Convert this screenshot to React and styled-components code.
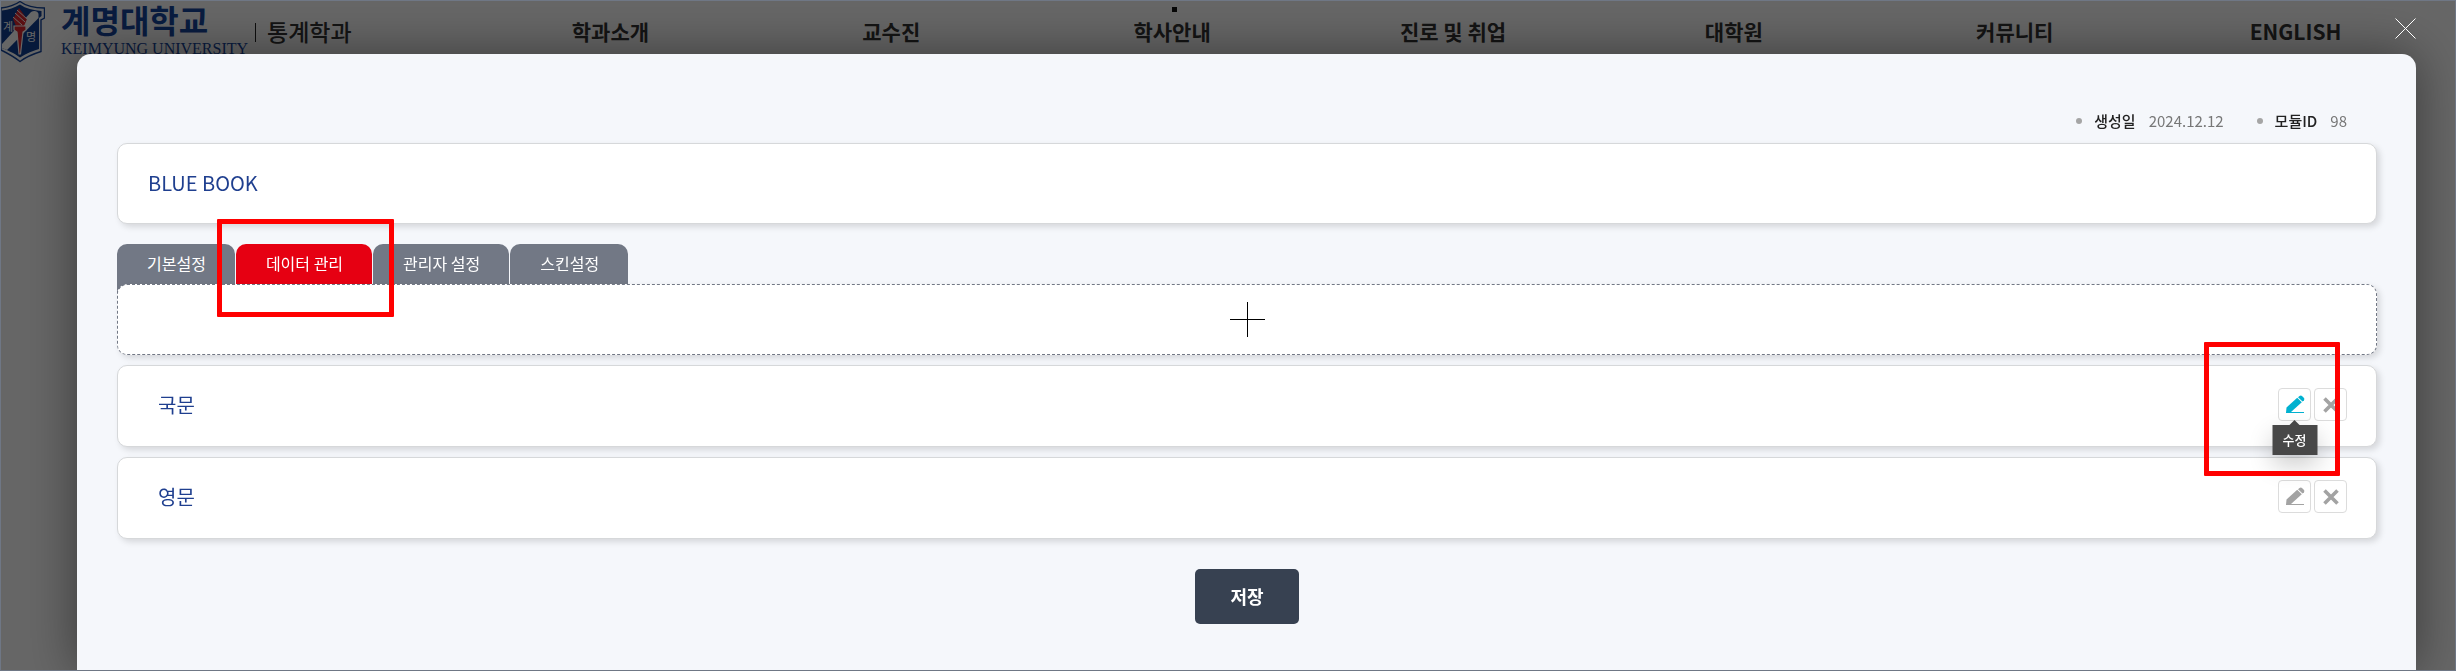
import { useState } from "react";
import styled, { createGlobalStyle, css } from "styled-components";

const GlobalStyle = createGlobalStyle`
  * {
    box-sizing: border-box;
  }
  body {
    margin: 0;
    background: #fff;
    color: #222;
    font-family: "Noto Sans CJK KR", "Noto Sans", sans-serif;
  }
  button {
    font-family: inherit;
  }
`;

const menus = [
  "학과소개",
  "교수진",
  "학사안내",
  "진로 및 취업",
  "대학원",
  "커뮤니티",
  "ENGLISH",
];

const tabs = ["기본설정", "데이터 관리", "관리자 설정", "스킨설정"];

const rows = [
  { id: "ko", name: "국문" },
  { id: "en", name: "영문" },
];

const Page = styled.div`
  min-height: 100vh;
`;

const Header = styled.header`
  display: flex;
  align-items: flex-start;
  height: 64px;
  padding-right: 20px;
`;

const Brand = styled.a`
  display: flex;
  flex: 0 0 470px;
  color: #16469e;
  text-decoration: none;
`;

const Wordmark = styled.span`
  display: flex;
  flex-direction: column;
  width: 184px;
  margin: 4px 10px 0 16px;
`;

const WordmarkKo = styled.strong`
  font-family: "Liberation Sans", "Noto Sans CJK KR", sans-serif;
  font-size: 32px;
  font-weight: 700;
  line-height: 36px;
  white-space: nowrap;
`;

const WordmarkEn = styled.span`
  font-family: "Liberation Serif", serif;
  font-size: 16px;
  line-height: 18px;
  white-space: nowrap;
`;

const Department = styled.span`
  height: 19px;
  margin-top: 23px;
  padding-left: 11px;
  border-left: 1px solid #222;
  color: #333;
  font-size: 23px;
  font-weight: 500;
  line-height: 16px;
`;

const Menu = styled.nav`
  display: grid;
  flex: 1;
  grid-template-columns: repeat(7, 1fr);
`;

const MenuLink = styled.a`
  position: relative;
  padding-top: 15px;
  color: #333;
  font-size: 21px;
  font-weight: 700;
  line-height: 32px;
  text-align: center;
  text-decoration: none;

  ${({ $current }) =>
    $current &&
    css`
      &::before {
        content: "";
        position: absolute;
        top: 7px;
        left: 50%;
        width: 5px;
        height: 5px;
        background: #111;
      }
    `}
`;

const Overlay = styled.div`
  position: fixed;
  inset: 0;
  display: flex;
  padding: 54px 40px 0 77px;
  background: rgba(0, 0, 0, 0.6);
  overflow: hidden;
`;

const Frame = styled.div`
  position: fixed;
  inset: 0;
  border: 1px solid #6f7785;
  pointer-events: none;
`;

const CloseButton = styled.button`
  position: absolute;
  top: 18px;
  right: 40px;
  width: 21px;
  height: 21px;
  padding: 0;
  border: 0;
  background: none;
  cursor: pointer;

  svg {
    display: block;
  }
`;

const Modal = styled.section`
  flex: 1;
  padding: 48px 39px 40px 40px;
  border-radius: 14px 14px 0 0;
  background: #f5f7fb;
  box-shadow: 0 0 50px rgba(0, 0, 0, 0.45);
`;

const Meta = styled.dl`
  display: flex;
  justify-content: flex-end;
  gap: 33px;
  margin: 0;
  padding: 8px 30px 11px 0;
  font-size: 15px;
  line-height: 22px;
`;

const MetaItem = styled.div`
  display: flex;
  align-items: center;

  &::before {
    content: "";
    width: 6px;
    height: 6px;
    margin-right: 12px;
    border-radius: 50%;
    background: #a5a5a5;
  }

  dt {
    color: #222;
    font-weight: 500;
  }

  dd {
    margin: 0 0 0 13px;
    color: #777;
    font-weight: 400;
  }
`;

const Card = styled.div`
  display: flex;
  align-items: center;
  justify-content: space-between;
  height: 82px;
  padding: 0 29px 3px 40px;
  border: 1px solid #d6d8da;
  border-radius: 10px;
  background: #fff;
  box-shadow: 3px 3px 6px rgba(0, 0, 0, 0.13);
  color: #1f3f8f;
  font-size: 20px;
`;

const TitleCard = styled(Card)`
  height: 81px;
  padding-left: 30px;
`;

const Title = styled.h1`
  margin: 0;
  font-size: 20px;
  font-weight: 400;
`;

const Tabs = styled.div`
  display: flex;
  gap: 1px;
  height: 40px;
  margin-top: 20px;
`;

const Tab = styled.button`
  display: block;
  height: ${({ $first }) => ($first ? "50px" : "40px")};
  padding: 0 29px ${({ $first }) => ($first ? "12px" : "2px")} 30px;
  border: 0;
  border-radius: 10px 10px 0 0;
  background: ${({ $active }) => ($active ? "#e60012" : "#727885")};
  color: #fff;
  font-size: 16px;
  line-height: 38px;
  white-space: nowrap;
  cursor: pointer;
`;

const AddButton = styled.button`
  position: relative;
  display: flex;
  align-items: center;
  justify-content: center;
  width: 100%;
  height: 71px;
  border: 1px dashed #727885;
  border-radius: 10px;
  background: #fff;
  box-shadow: 3px 3px 6px rgba(0, 0, 0, 0.13);
  cursor: pointer;
`;

const RowList = styled.ul`
  display: flex;
  flex-direction: column;
  gap: 10px;
  margin: 10px 0 0;
  padding: 0;
  list-style: none;
`;

const Actions = styled.div`
  display: flex;
  gap: 3px;
`;

const IconButton = styled.button`
  position: relative;
  width: 33px;
  height: 33px;
  padding: 0;
  border: 1px solid #dcdcdc;
  border-radius: 4px;
  background: #fff;
  color: ${({ $active }) => ($active ? "#00b1d0" : "#a3a3a3")};
  cursor: pointer;

  svg {
    display: block;
    margin: auto;
  }
`;

const Tooltip = styled.span`
  position: absolute;
  z-index: 1;
  top: 36px;
  left: 50%;
  width: 45px;
  transform: translateX(-50%);
  background: #484848;
  box-shadow: 0 10px 24px rgba(0, 0, 0, 0.2);
  color: #fff;
  font-size: 13px;
  font-weight: 500;
  line-height: 30px;
  text-align: center;

  &::before {
    content: "";
    position: absolute;
    bottom: 100%;
    left: 50%;
    margin-left: -5px;
    border: 5px solid transparent;
    border-top: 0;
    border-bottom-color: #484848;
  }
`;

const SaveButton = styled.button`
  display: block;
  height: 55px;
  margin: 30px auto 0;
  padding: 0 35px 2px;
  border: 0;
  border-radius: 5px;
  background: #374151;
  color: #fff;
  font-size: 18px;
  font-weight: 700;
  cursor: pointer;
`;

const Marked = styled.div`
  position: relative;
`;

const Mark = styled.span`
  position: absolute;
  z-index: 2;
  border: 5px solid #f00;
  border-radius: 1px;
  pointer-events: none;
`;

const TabMark = styled(Mark)`
  top: -25px;
  right: -22px;
  bottom: -33px;
  left: -19px;
`;

const ActionMark = styled(Mark)`
  top: -46px;
  right: 7px;
  bottom: -55px;
  left: -74px;
`;

const Emblem = () => (
  <svg width="45" height="63" viewBox="0 0 45 63" aria-hidden="true">
    <path
      d="M20 1.500C15 5 9 7 1 8V50C7 53 13 56 20 61.500C27 56 33 54 41 51.500V20L44.500 18V8C34 8 26 6 20 1.500Z"
      fill="#fff"
      stroke="#16469e"
      strokeWidth="1.400"
    />
    <path
      d="M20 4.500C14 8 9 9.500 2 10.500V48C9 51 14 53 20 57.500C27 53 33 51 39 49V18L41.500 16V11C33 10.500 26 8.500 20 4.500Z"
      fill="#103f94"
    />
    <path d="M2 44L31 12C34 10 38 11 38.500 14V18L7 50L2 48Z" fill="#fff" />
    <path d="M13 19L19 8L27 19L24 26H16Z" fill="#e02a30" />
    <path
      d="M13 17L22 25M15 13L25 22M17 10L27 19"
      stroke="#fff"
      strokeWidth="1"
    />
    <path
      d="M14 26H26V30L23 32L20.500 54H19L17 32L14 30Z"
      fill="#e02a30"
      stroke="#fff"
      strokeWidth="1.200"
    />
    <text x="3" y="31" fill="#fff" fontSize="11">
      계
    </text>
    <text x="26" y="41" fill="#fff" fontSize="11">
      명
    </text>
  </svg>
);

const PencilIcon = () => (
  <svg width="20" height="20" viewBox="0 0 20 20" aria-hidden="true">
    <path
      d="M1 18L1.500 12.500L12.200 2.800L16.800 7.200L6 17Z"
      fill="currentColor"
    />
    <path
      d="M13 2.200L14.500 1Q16 .2 17 1L19 3Q19.800 4 19 5.200L17.500 6.500Z"
      fill="currentColor"
    />
    <path d="M1 17.500H19" stroke="currentColor" />
  </svg>
);

const DeleteIcon = () => (
  <svg width="16" height="16" viewBox="0 0 16 16" aria-hidden="true">
    <path
      d="M1.500 1.500L14.500 14.500M14.500 1.500L1.500 14.500"
      stroke="currentColor"
      strokeWidth="3.600"
    />
  </svg>
);

const Row = ({ name, editing }) => (
  <Card as="li">
    <span>{name}</span>
    <Marked>
      <Actions>
        <IconButton type="button" aria-label={`${name} 수정`} $active={editing}>
          <PencilIcon />
          {editing && <Tooltip role="tooltip">수정</Tooltip>}
        </IconButton>
        <IconButton type="button" aria-label={`${name} 삭제`}>
          <DeleteIcon />
        </IconButton>
      </Actions>
      {editing && <ActionMark />}
    </Marked>
  </Card>
);

export default function App() {
  const [tab, setTab] = useState(tabs[1]);

  return (
    <Page>
      <GlobalStyle />
      <Header>
        <Brand href="#">
          <Emblem />
          <Wordmark>
            <WordmarkKo>계명대학교</WordmarkKo>
            <WordmarkEn>KEIMYUNG UNIVERSITY</WordmarkEn>
          </Wordmark>
          <Department>통계학과</Department>
        </Brand>
        <Menu>
          {menus.map((menu) => (
            <MenuLink key={menu} href="#" $current={menu === "학사안내"}>
              {menu}
            </MenuLink>
          ))}
        </Menu>
      </Header>
      <Overlay>
        <CloseButton type="button" aria-label="닫기">
          <svg width="21" height="21" viewBox="0 0 21 21">
            <path d="M.5 .5L20.500 20.500M20.500 .5L.5 20.500" stroke="#fff" />
          </svg>
        </CloseButton>
        <Modal role="dialog" aria-label="BLUE BOOK">
          <Meta>
            <MetaItem>
              <dt>생성일</dt>
              <dd>2024.12.12</dd>
            </MetaItem>
            <MetaItem>
              <dt>모듈ID</dt>
              <dd>98</dd>
            </MetaItem>
          </Meta>
          <TitleCard>
            <Title>BLUE BOOK</Title>
          </TitleCard>
          <Tabs role="tablist">
            {tabs.map((name, i) => (
              <Marked key={name}>
                <Tab
                  type="button"
                  role="tab"
                  aria-selected={tab === name}
                  $active={tab === name}
                  $first={i === 0}
                  onClick={() => setTab(name)}
                >
                  {name}
                </Tab>
                {i === 1 && <TabMark />}
              </Marked>
            ))}
          </Tabs>
          <AddButton type="button" aria-label="추가">
            <svg width="35" height="35" viewBox="0 0 35 35">
              <path d="M17.500 0V35M0 17.500H35" stroke="#000" />
            </svg>
          </AddButton>
          <RowList>
            {rows.map(({ id, name }) => (
              <Row key={id} name={name} editing={id === "ko"} />
            ))}
          </RowList>
          <SaveButton type="button">저장</SaveButton>
        </Modal>
      </Overlay>
      <Frame />
    </Page>
  );
}
